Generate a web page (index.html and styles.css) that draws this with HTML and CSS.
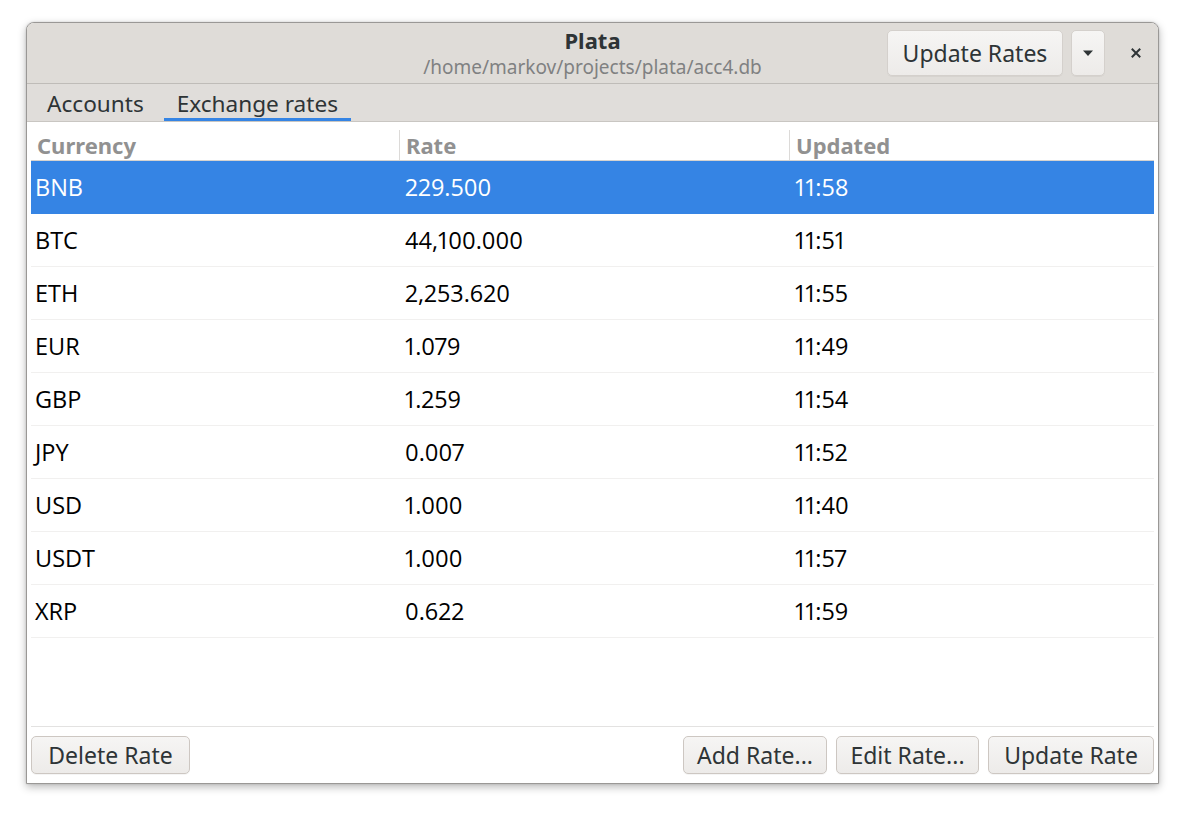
FILE: index.html
```html
<!DOCTYPE html>
<html>
<head>
<meta charset="utf-8">
<title>Plata</title>
<link rel="stylesheet" href="styles.css">
</head>
<body>
<div class="window">
  <header class="headerbar">
    <div class="hb-left"></div>
    <div class="hb-title">
      <div class="title">Plata</div>
      <div class="subtitle">/home/markov/projects/plata/acc4.db</div>
    </div>
    <div class="hb-right">
      <button class="btn hb-btn">Update Rates</button>
      <button class="btn hb-btn menu-btn" aria-label="More">
        <svg width="12" height="7" viewBox="0 0 12 7"><path d="M1 0.5 H11 L6 6 Z" fill="#2e3436"/></svg>
      </button>
      <button class="close-btn" aria-label="Close">
        <svg width="10" height="10" viewBox="0 0 10 10"><path d="M1.5 1.5 L8.5 8.5 M8.5 1.5 L1.5 8.5" stroke="#2e3436" stroke-width="2" stroke-linecap="square"/></svg>
      </button>
    </div>
  </header>
  <nav class="tabs">
    <div class="tab">Accounts</div>
    <div class="tab active">Exchange rates</div>
  </nav>
  <main class="content">
    <div class="table">
      <div class="thead">
        <div class="th c1">Currency</div>
        <div class="th c2 sep">Rate</div>
        <div class="th c3 sep">Updated</div>
      </div>
      <div class="row selected"><div class="td c1">BNB</div><div class="td c2">229.500</div><div class="td c3">11:58</div></div>
      <div class="row"><div class="td c1">BTC</div><div class="td c2">44,100.000</div><div class="td c3">11:51</div></div>
      <div class="row"><div class="td c1">ETH</div><div class="td c2">2,253.620</div><div class="td c3">11:55</div></div>
      <div class="row"><div class="td c1">EUR</div><div class="td c2">1.079</div><div class="td c3">11:49</div></div>
      <div class="row"><div class="td c1">GBP</div><div class="td c2">1.259</div><div class="td c3">11:54</div></div>
      <div class="row"><div class="td c1">JPY</div><div class="td c2">0.007</div><div class="td c3">11:52</div></div>
      <div class="row"><div class="td c1">USD</div><div class="td c2">1.000</div><div class="td c3">11:40</div></div>
      <div class="row"><div class="td c1">USDT</div><div class="td c2">1.000</div><div class="td c3">11:57</div></div>
      <div class="row"><div class="td c1">XRP</div><div class="td c2">0.622</div><div class="td c3">11:59</div></div>
    </div>
    <div class="actions">
      <button class="btn act-btn delete">Delete Rate</button>
      <div class="spacer"></div>
      <button class="btn act-btn add">Add Rate...</button>
      <button class="btn act-btn edit">Edit Rate...</button>
      <button class="btn act-btn upd">Update Rate</button>
    </div>
  </main>
</div>
</body>
</html>
```

FILE: styles.css
```css
* { box-sizing: border-box; }
html, body { margin: 0; padding: 0; background: #ffffff; }
body {
  font-family: "Noto Sans", "Open Sans", sans-serif;
  color: #2e3436;
  width: 1184px;
  height: 813px;
  overflow: hidden;
}
.window {
  margin: 22px 0 0 26px;
  width: 1133px;
  height: 762px;
  border: 1px solid #9a9896;
  border-radius: 8px 8px 0 0;
  overflow: hidden;
  display: flex;
  flex-direction: column;
  background: #ffffff;
  box-shadow: 0 3px 9px rgba(0,0,0,0.28), 0 0 2px rgba(0,0,0,0.15);
}
.headerbar {
  height: 61px;
  flex: none;
  background: #dfdcd8;
  border-bottom: 1px solid #bfbcb8;
  display: grid;
  grid-template-columns: 1fr auto 1fr;
  align-items: center;
}
.hb-title {
  text-align: center;
  padding-top: 1px;
}
.title {
  font-weight: bold;
  font-size: 22px;
  line-height: 24px;
  margin-bottom: 3px;
  color: #2e3436;
}
.subtitle {
  font-size: 19px;
  line-height: 24px;
  color: #7f8182;
}
.hb-right {
  display: flex;
  justify-content: flex-end;
  align-items: center;
  gap: 8px;
  padding-right: 5px;
}
.btn {
  font-family: "Noto Sans", "Open Sans", sans-serif;
  color: #2e3436;
  background: linear-gradient(#f6f5f4, #edebe9);
  border: 1px solid #cdc7c2;
  border-radius: 5px;
  box-shadow: 0 1px rgba(0,0,0,0.04);
  padding: 0;
  margin: 0;
}
.hb-btn {
  height: 46px;
  width: 176px;
  font-size: 23px;
  border-color: #d4d0cc;
}
.menu-btn {
  width: 34px;
  display: flex;
  align-items: center;
  justify-content: center;
}
.close-btn {
  width: 34px;
  height: 34px;
  border: none;
  background: transparent;
  display: flex;
  align-items: center;
  justify-content: center;
  margin-left: 6px;
}
.tabs {
  height: 38px;
  flex: none;
  background: #e0ddda;
  border-bottom: 1px solid #c9c6c2;
  display: flex;
  padding-left: 7px;
  gap: 7px;
}
.tab {
  padding: 2px 13px 0;
  font-size: 22.6px;
  line-height: 35px;
  color: #2e3436;
  border-bottom: 3px solid transparent;
  height: 37px;
}
.tab.active {
  border-bottom-color: #3584e4;
}
.content {
  flex: 1;
  display: flex;
  flex-direction: column;
  padding: 0 4px;
}
.table {
  flex: 1;
}
.thead {
  display: grid;
  grid-template-columns: 368px 390px 1fr;
  height: 39px;
  border-bottom: 1px solid #d6d3d0;
  align-items: end;
}
.th {
  font-weight: bold;
  font-size: 22px;
  color: #919191;
  padding-left: 6px;
  height: 30px;
  line-height: 31px;
}
.th.sep {
  border-left: 1px solid #dcdad8;
}
.row {
  display: grid;
  grid-template-columns: 369px 390px 1fr;
  height: 53px;
  border-bottom: 1px solid #f1f0ef;
  align-items: center;
  font-family: "Open Sans", "Noto Sans", sans-serif;
  font-variant-numeric: proportional-nums;
  font-size: 23.5px;
  color: #000000;
}
.row.selected {
  background: #3584e4;
  color: #ffffff;
  border-bottom-color: #3584e4;
}
.td { padding-left: 4px; }
.td.c2 { padding-left: 5px; }
.td.c3 { padding-left: 5px; }
.actions {
  flex: none;
  display: flex;
  gap: 9px;
  border-top: 1px solid #e3e2e1;
  padding: 9px 0 9px 0;
}
.spacer { flex: 1; }
.act-btn {
  height: 38px;
  font-size: 23px;
}
.delete { width: 159px; }
.add { width: 144px; }
.edit { width: 143px; }
.upd { width: 166px; }
```
